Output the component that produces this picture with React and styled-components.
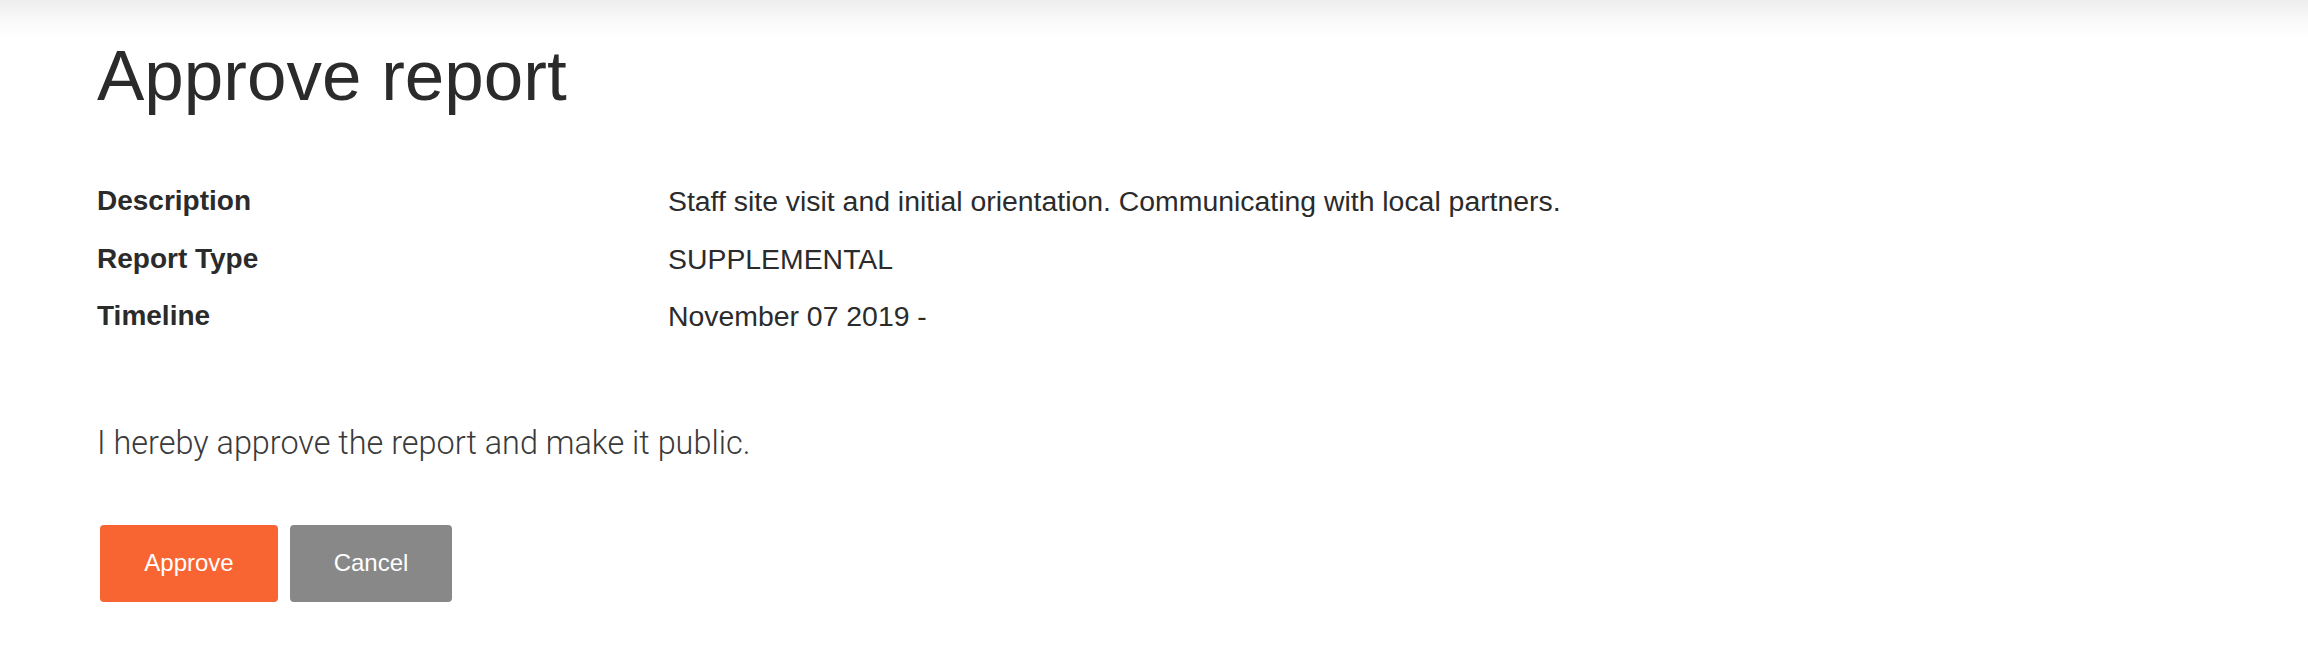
import React from 'react'
import styled, { createGlobalStyle } from 'styled-components'

const GlobalStyle = createGlobalStyle`
 body {
  margin: 0;
  background: #fff;
  font-family: "Liberation Sans", Arial, Helvetica, sans-serif;
  color: #2b2b2b;
 }
`

const Page = styled.div`
 min-height: 670px;
 background: linear-gradient(to bottom, #eeeeee 0px, #f8f8f8 18px, #ffffff 40px) no-repeat top / 100% 40px;
 padding: 37px 0 0 97px;
 box-sizing: border-box;
`

const Title = styled.h1`
 font-size: 71px;
 line-height: 1.1;
 font-weight: 400;
 margin: 0;
 color: #2b2b2b;
`

const Details = styled.dl`
 display: grid;
 grid-template-columns: 571px 1fr;
 row-gap: 17px;
 margin: 66px 0 0;
`

const Label = styled.dt`
 font-size: 28px;
 line-height: 40.5px;
 font-weight: 700;
 margin: 0;
`

const Value = styled.dd`
 font-size: 28.4px;
 line-height: 40.5px;
 margin: 0;
`

const Notice = styled.p`
 font-family: Roboto, "Liberation Sans", sans-serif;
 font-weight: 300;
 font-size: 32.4px;
 line-height: 40px;
 margin: 86px 0 0;
 color: #3a3a3a;
`

const ButtonRow = styled.div`
 display: flex;
 gap: 12px;
 margin-top: 62px;
 padding-left: 3px;
`

const Button = styled.button`
 width: ${props => props.wide ? '178px' : '162px'};
 height: 77px;
 border: none;
 border-radius: 4px;
 background-color: ${props => props.primary ? '#f96532' : '#888888'};
 color: #fff;
 font-family: "Liberation Sans", Arial, sans-serif;
 font-size: 24px;
 cursor: pointer;
`

const details = [
 ['Description', 'Staff site visit and initial orientation. Communicating with local partners.'],
 ['Report Type', 'SUPPLEMENTAL'],
 ['Timeline', 'November 07 2019 -'],
]

const App = () => {
 return (
  <Page>
   <GlobalStyle />
   <Title>Approve report</Title>
   <Details>
    {details.map(([label, value]) => (
     <React.Fragment key={label}>
      <Label>{label}</Label>
      <Value>{value}</Value>
     </React.Fragment>
    ))}
   </Details>
   <Notice>I hereby approve the report and make it public.</Notice>
   <ButtonRow>
    <Button primary wide>Approve</Button>
    <Button>Cancel</Button>
   </ButtonRow>
  </Page>
 )
}

export default App
